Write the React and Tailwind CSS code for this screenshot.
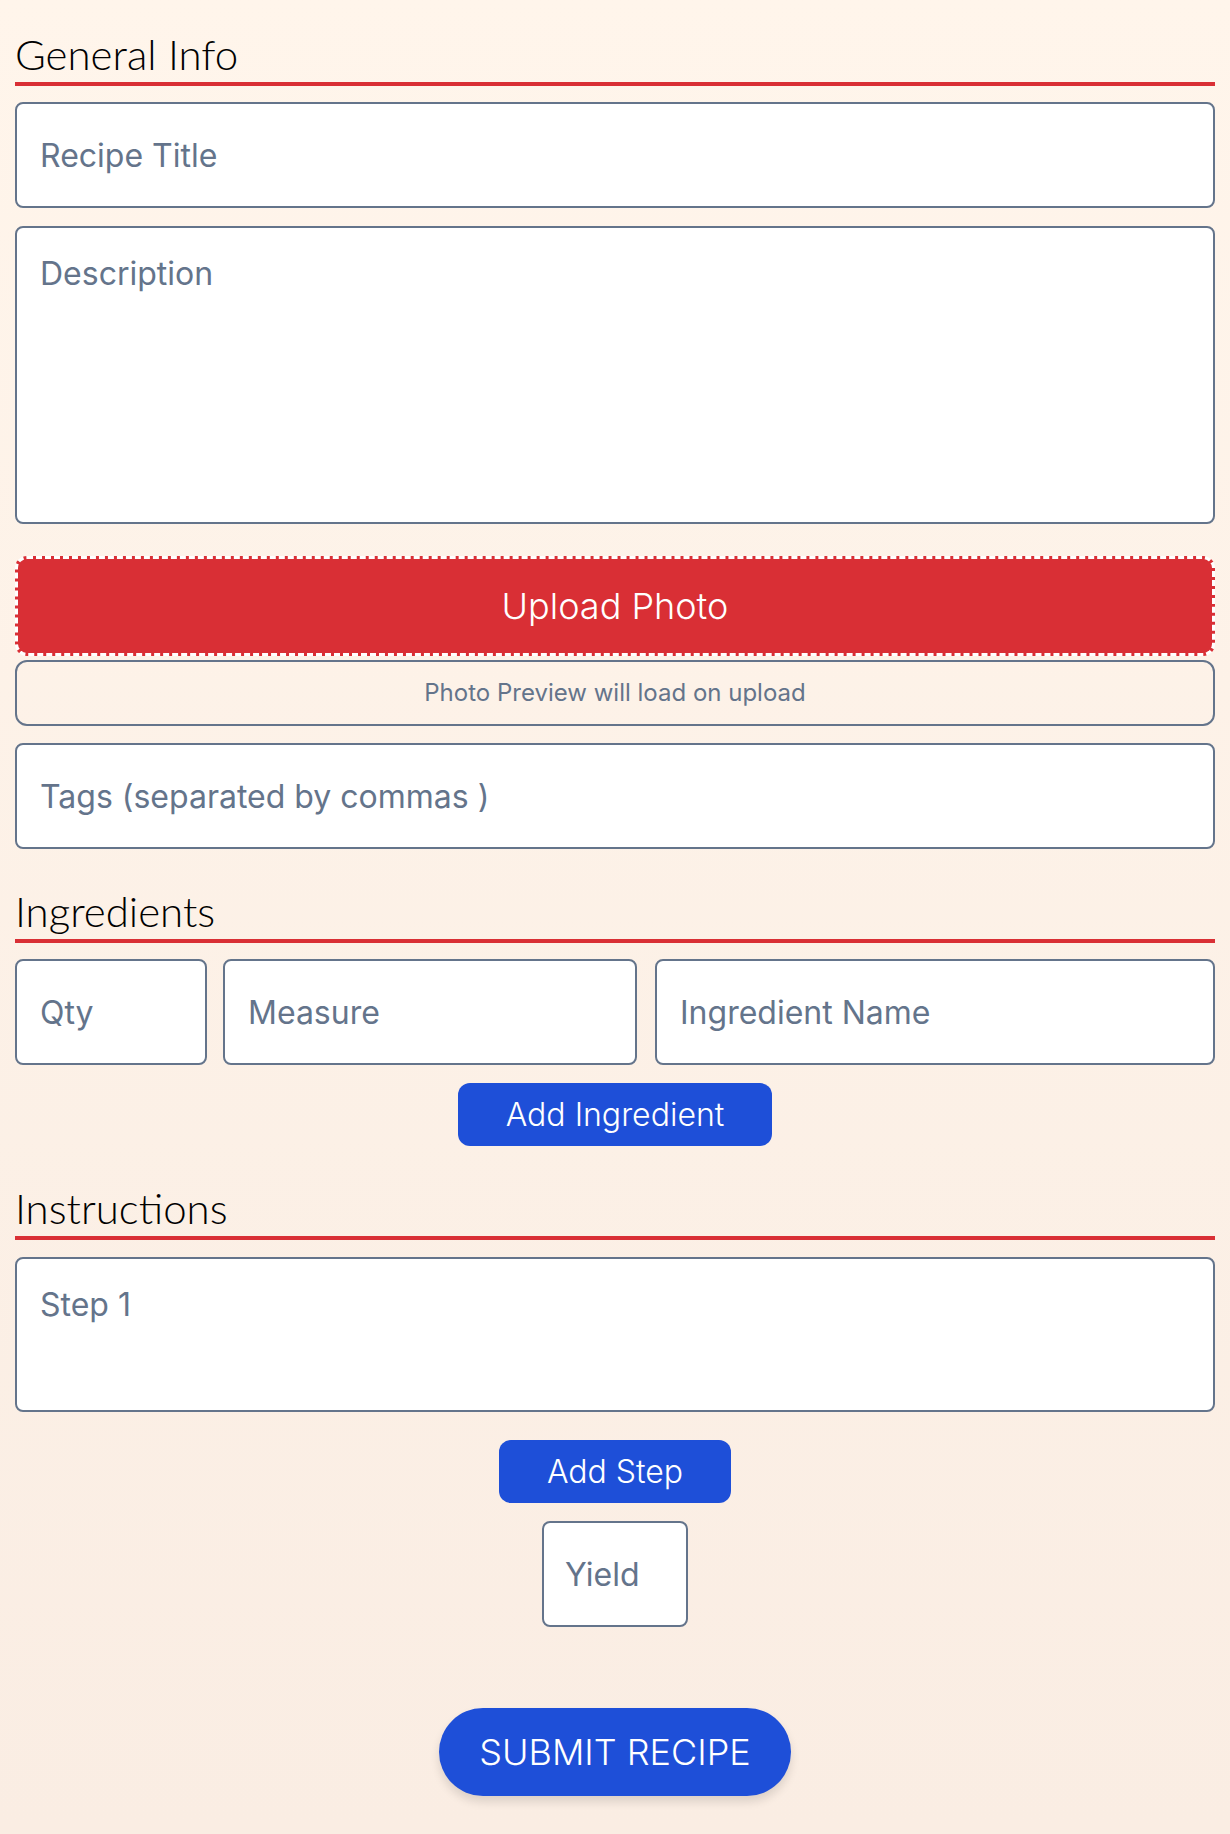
import React, { useState } from 'react';

const inputCls =
  "block w-full h-[106px] rounded-lg border-2 border-[#64748b] bg-white px-[23px] text-[32px] text-[#475569] placeholder:text-[#64748b] outline-none font-['Inter',sans-serif]";

function SectionTitle({ children, className = '' }) {
  return (
    <h2
      className={`border-b-4 border-[#d92f35] pb-[4px] text-[42px] leading-[48px] font-light text-black font-['Lato',sans-serif] ${className}`}
    >
      {children}
    </h2>
  );
}

export default function App() {
  const [steps, setSteps] = useState(['']);
  const [ingredients, setIngredients] = useState([{ qty: '', measure: '', name: '' }]);

  return (
    <div className="min-h-[1834px] w-full bg-gradient-to-b from-[#fff5eb] to-[#faede3] font-['Inter',sans-serif]">
      <form
        onSubmit={e => e.preventDefault()}
        className="mx-auto flex w-full flex-col px-[15px] pt-[30px] pb-[38px]"
      >
        <SectionTitle>General Info</SectionTitle>
        <input type="text" placeholder="Recipe Title" className={`${inputCls} mt-[16px]`} />
        <textarea
          placeholder="Description"
          className="mt-[18px] block h-[298px] w-full resize-none rounded-lg border-2 border-[#64748b] bg-white px-[23px] pt-[22px] text-[32px] text-[#475569] placeholder:text-[#64748b] outline-none"
        />
        <button
          type="button"
          className="mt-[32px] flex h-[100px] w-full items-center justify-center rounded-xl border-[3px] border-dashed border-white bg-[#d92f35] text-[36px] font-light text-white"
        >
          Upload Photo
        </button>
        <div className="mt-[4px] flex h-[66px] w-full items-center justify-center rounded-xl border-2 border-[#64748b] text-[24px] text-[#64748b]">
          Photo Preview will load on upload
        </div>
        <input type="text" placeholder="Tags (separated by commas )" className={`${inputCls} mt-[17px]`} />

        <SectionTitle className="mt-[38px]">Ingredients</SectionTitle>
        {ingredients.map((ing, i) => (
          <div key={i} className="mt-[16px] flex">
            <input type="text" placeholder="Qty" className={`${inputCls} !w-[192px] shrink-0`} />
            <input type="text" placeholder="Measure" className={`${inputCls} ml-[16px] !w-[414px] shrink-0`} />
            <input type="text" placeholder="Ingredient Name" className={`${inputCls} ml-[18px] flex-1`} />
          </div>
        ))}
        <div className="mt-[18px] flex justify-center">
          <button
            type="button"
            onClick={() => setIngredients(l => [...l, { qty: '', measure: '', name: '' }])}
            className="h-[63px] w-[314px] rounded-xl bg-[#1e4fd8] text-[32px] font-light text-white"
          >
            Add Ingredient
          </button>
        </div>

        <SectionTitle className="mt-[38px]">Instructions</SectionTitle>
        {steps.map((s, i) => (
          <textarea
            key={i}
            placeholder={`Step ${i + 1}`}
            className="mt-[17px] block h-[155px] w-full resize-none rounded-lg border-2 border-[#64748b] bg-white px-[23px] pt-[22px] text-[32px] text-[#475569] placeholder:text-[#64748b] outline-none"
          />
        ))}
        <div className="mt-[28px] flex flex-col items-center">
          <button
            type="button"
            onClick={() => setSteps(l => [...l, ''])}
            className="h-[63px] w-[232px] rounded-xl bg-[#1e4fd8] text-[32px] font-light text-white"
          >
            Add Step
          </button>
          <input
            type="text"
            placeholder="Yield"
            className="mt-[18px] block h-[106px] w-[146px] rounded-lg border-2 border-[#64748b] bg-white px-[21px] text-[32px] text-[#475569] placeholder:text-[#64748b] outline-none"
          />
          <button
            type="submit"
            className="mt-[81px] h-[88px] w-[352px] rounded-full bg-[#1e4fd8] text-[36px] font-light text-white shadow-[0_6px_10px_rgba(0,0,0,0.12)]"
          >
            SUBMIT RECIPE
          </button>
        </div>
      </form>
    </div>
  );
}
